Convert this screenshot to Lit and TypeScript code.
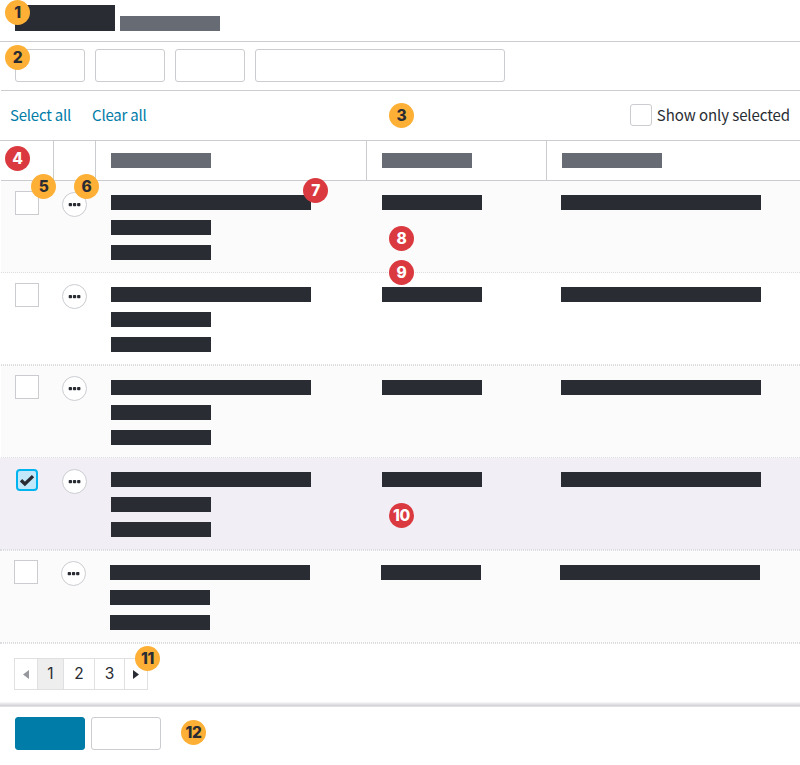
import { LitElement, html, css, svg } from "lit";
import { customElement, property } from "lit/decorators.js";
import { classMap } from "lit/directives/class-map.js";

@customElement("num-badge")
class NumBadge extends LitElement {
  @property() n = "";
  @property({ type: Boolean, reflect: true }) red = false;
  static styles = css`
    :host { position: absolute; width: 25px; height: 25px; border-radius: 50%; background: #fdb035; color: #292c33;
      font: 800 15.5px/25px Inter, sans-serif; letter-spacing: -0.4px; text-align: center; z-index: 2; }
    :host([red]) { background: #da3a3f; color: #fff; }
  `;
  render() { return html`${this.n}`; }
}

@customElement("app-root")
class AppRoot extends LitElement {
  static styles = css`
    * { box-sizing: border-box; }
    :host { display: block; position: relative; width: 800px; height: 765px; overflow: hidden; background: #fff;
      color: #292c33; font: 15px/24px "Noto Sans CJK SC", "Noto Sans", sans-serif; }
    .title { display: flex; align-items: flex-end; gap: 5px; height: 42px; padding: 0 15px 10px; border-bottom: 1px solid #caccd0; }
    .name { width: 100px; height: 26px; background: #292c33; }
    .sub { width: 100px; height: 15px; background: #676b74; }
    .tools { display: flex; gap: 10px; height: 49px; padding: 7px 14px; margin-left: 1px; border-bottom: 1px solid #caccd0; }
    .box { width: 70px; height: 33px; border: 1px solid #caccd0; border-radius: 3px; background: #fff; }
    .wide { width: 250px; }
    .primary { background: #007ca8; border-color: #007ca8; }
    .actions { display: flex; align-items: center; height: 50px; padding: 0 10px 1px; border-bottom: 1px solid #caccd0; }
    .link { color: #007ca8; margin-right: 21px; white-space: nowrap; letter-spacing: -0.22px; }
    .only { display: flex; align-items: center; gap: 5px; margin-left: auto; white-space: nowrap; letter-spacing: -0.08px; }
    .check { width: 22px; height: 22px; border: 1px solid #caccd0; border-radius: 3px; }
    .grid { display: grid; grid-template-columns: 53px 42px 271px 180px 1fr; }
    .head { height: 40px; margin-left: 1px; border-bottom: 1px solid #caccd0; }
    .head > div { border-right: 1px solid #caccd0; padding: 12px 0 0 15px; }
    .head > div:last-child { border-right: 0; }
    .hb { width: 100px; height: 15px; background: #676b74; }
    .hb.short { width: 90px; }
    .row { height: 92px; margin-left: 1px; border-bottom: 1px dotted #dcdde0; }
    .row.alt { background: #fbfbfb; }
    .row.sel { background: #f1eef5; }
    .row.full { margin-left: 0; padding-left: 1px; }
    .row.last { margin-left: 0; }
    .row.tall { height: 93px; border-top: 1px dotted #dcdde0; }
    .row > div { padding-top: 14px; }
    .row > .c1 { padding: 10px 0 0 14px; }
    .row > .c2 { padding: 11px 0 0 8px; }
    .row.tall > .c1 { padding-top: 9px; }
    .row.tall > .c2 { padding-top: 10px; }
    .row > .c3, .row > .c4 { padding-left: 15px; }
    .row > .c5 { padding-left: 14px; }
    .end { border-top: 1px dotted #dcdde0; }
    .square { width: 24px; height: 24px; border: 1px solid #caccd0; background: #fff; }
    .bar { width: 100px; height: 15px; background: #292c33; margin-bottom: 10px; }
    .bar.long { width: 200px; }
    svg { display: block; }
    .pages { display: flex; width: 134px; height: 32px; margin: 14px 0 0 14px; border: 1px solid #dfe0e2;
      font: 15.5px/30px Inter, sans-serif; text-align: center; }
    .pages > div { flex: none; border-right: 1px solid #dfe0e2; display: flex; align-items: center; justify-content: center; }
    .pages > div:last-child { border-right: 0; }
    .arrow { width: 23px; }
    .arrow.next { width: 22px; }
    .p1 { width: 26px; background: #eee; }
    .p2 { width: 31px; }
    .p3 { width: 30px; }
    .fade { height: 4px; margin-top: 12px; background: linear-gradient(#fafafb, #d0d0d4); }
    .foot { display: flex; gap: 6px; padding: 10px 15px; border-top: 1px solid #e1e1e5; }
    .b1 { left: 5px; top: 0; } .b2 { left: 5px; top: 45px; } .b3 { left: 389px; top: 103px; }
    .b4 { left: 5px; top: 146px; } .b5 { left: 31px; top: 174px; } .b6 { left: 74px; top: 174px; }
    .b7 { left: 303px; top: 178px; } .b8 { left: 389px; top: 226px; } .b9 { left: 389px; top: 260px; }
    .b10 { left: 389px; top: 503px; } .b11 { left: 135px; top: 646px; } .b12 { left: 181px; top: 720px; }
  `;

  row(i: number) {
    const sel = i === 3;
    return html`<div class=${classMap({ grid: true, row: true, tall: i === 2 || i === 4, alt: i % 2 === 0, sel, full: sel, last: i === 4 })}>
      <div class="c1">${sel
        ? html`<svg width="24" height="24" viewBox="0 0 24 24"><rect x="2" y="2" width="20" height="20" rx="3" fill="#c3e8f9" stroke="#00b4ef" stroke-width="2"/><path d="M6 12.2l3.9 3.8 8.1-7.9" fill="none" stroke="#292c33" stroke-width="3.3"/></svg>`
        : html`<div class="square"></div>`}</div>
      <div class="c2"><svg width="25" height="25" viewBox="0 0 25 25"><circle cx="12.5" cy="12.5" r="12" fill="#fff" stroke="#caccd0"/>${[6.7, 10.9, 15.1].map(x => svg`<rect x=${x} y="11" width="3.3" height="3.2" rx=".8" fill="#292c33"/>`)}</svg></div>
      <div class="c3"><div class="bar long"></div><div class="bar"></div><div class="bar"></div></div>
      <div class="c4"><div class="bar"></div></div>
      <div class="c5"><div class="bar long"></div></div>
    </div>`;
  }

  render() {
    return html`
      <div class="title"><div class="name"></div><div class="sub"></div></div>
      <div class="tools"><div class="box"></div><div class="box"></div><div class="box"></div><div class="box wide"></div></div>
      <div class="actions"><span class="link">Select all</span><span class="link">Clear all</span>
        <div class="only"><div class="check"></div><span>Show only selected</span></div></div>
      <div class="grid head"><div></div><div></div><div><div class="hb"></div></div><div><div class="hb short"></div></div><div><div class="hb"></div></div></div>
      ${[0, 1, 2, 3, 4].map(i => this.row(i))}
      <div class="end"></div>
      <div class="pages">
        <div class="arrow"><svg width="6" height="9"><path d="M6 0v9L0 4.5z" fill="#96989d"/></svg></div>
        <div class="p1">1</div><div class="p2">2</div><div class="p3">3</div>
        <div class="arrow next"><svg width="6" height="9"><path d="M0 0v9l6-4.5z" fill="#292c33"/></svg></div>
      </div>
      <div class="fade"></div>
      <div class="foot"><div class="box primary"></div><div class="box"></div></div>
      ${[1, 2, 3, 4, 5, 6, 7, 8, 9, 10, 11, 12].map(n => html`<num-badge class="b${n}" n=${n} ?red=${[4, 7, 8, 9, 10].includes(n)}></num-badge>`)}
    `;
  }
}
